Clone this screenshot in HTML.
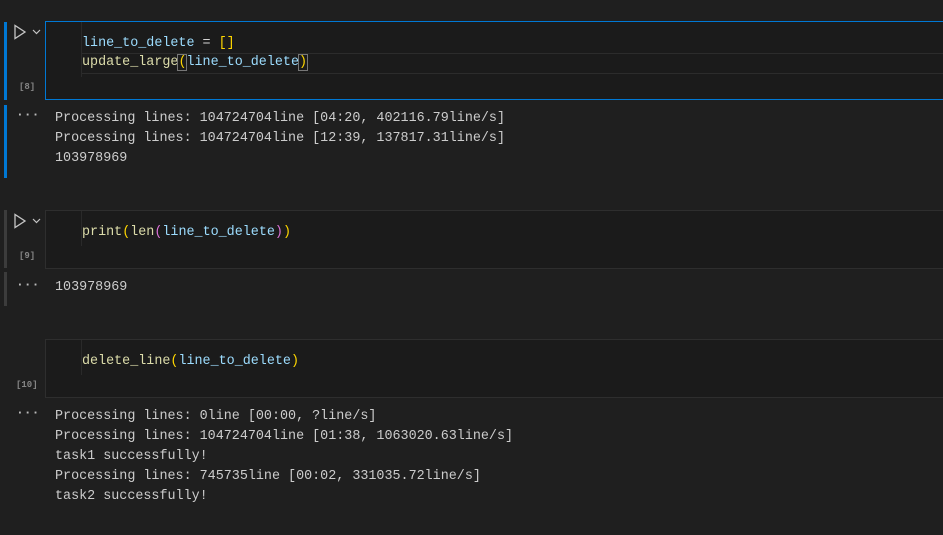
<!DOCTYPE html>
<html><head><style>
body{margin:0;width:943px;height:535px;background:#1f1f1f;overflow:hidden;position:relative;font-family:"Liberation Mono",monospace;font-size:13.4px;}
.a{position:absolute}
.box{position:absolute;left:45px;width:920px;background:#1b1b1b;border:1px solid #2e2e2e;box-sizing:border-box}
.t{position:absolute;white-space:pre;line-height:20px}
.o{color:#cccccc}
.f{color:#dcdcaa}.v{color:#9cdcfe}.y{color:#ffd700}.p{color:#da70d6}.w{color:#d4d4d4}.b{color:#179fff}
.num{position:absolute;color:#858585;font-size:9px;font-weight:bold}
.dots{position:absolute;color:#bbb;font-size:13px;font-weight:bold;letter-spacing:0px}
</style></head><body>
<div class="a" style="left:4px;top:22px;width:3px;height:78px;background:#0078d4"></div>
<div class="a" style="left:4px;top:105px;width:3px;height:73px;background:#0078d4"></div>
<div class="box" style="top:21px;height:79px;border:1px solid #0078d4"></div>
<div class="a" style="left:81px;top:22px;width:1px;height:55px;background:#2a2a2a"></div>
<div class="a" style="left:82px;top:53px;width:870px;height:19px;border-top:1px solid #2c2c2c;border-bottom:1px solid #2c2c2c"></div>
<svg class="a" style="left:13px;top:24px" width="30" height="16"><path d="M2 1.5 L2 14.5 L12 8 Z" fill="none" stroke="#c5c5c5" stroke-width="1.3"/><path d="M20 6 L23.5 9.5 L27 6" fill="none" stroke="#c5c5c5" stroke-width="1.2"/></svg>
<div class="num" style="left:19px;top:82px">[8]</div>
<div class="t" style="left:82px;top:34px"><span class="v">line_to_delete</span> <span class="w">=</span> <span class="y">[]</span></div>
<div class="t" style="left:82px;top:53px"><span class="f">update_large</span><span class="y" style="outline:1px solid #777">(</span><span class="v">line_to_delete</span><span class="y" style="outline:1px solid #777">)</span></div>
<div class="dots" style="left:16px;top:107px">···</div>
<div class="t o" style="left:55px;top:109px">Processing lines: 104724704line [04:20, 402116.79line/s]
Processing lines: 104724704line [12:39, 137817.31line/s]
103978969</div>

<div class="a" style="left:4px;top:210px;width:3px;height:58px;background:#3c3c3c"></div>
<div class="a" style="left:4px;top:272px;width:3px;height:34px;background:#3c3c3c"></div>
<div class="box" style="top:210px;height:59px"></div>
<div class="a" style="left:81px;top:211px;width:1px;height:35px;background:#2a2a2a"></div>
<svg class="a" style="left:13px;top:213px" width="30" height="16"><path d="M2 1.5 L2 14.5 L12 8 Z" fill="none" stroke="#c5c5c5" stroke-width="1.3"/><path d="M20 6 L23.5 9.5 L27 6" fill="none" stroke="#c5c5c5" stroke-width="1.2"/></svg>
<div class="num" style="left:19px;top:251px">[9]</div>
<div class="t" style="left:82px;top:223px"><span class="f">print</span><span class="y">(</span><span class="f">len</span><span class="p">(</span><span class="v">line_to_delete</span><span class="p">)</span><span class="y">)</span></div>
<div class="dots" style="left:16px;top:277px">···</div>
<div class="t o" style="left:55px;top:278px">103978969</div>

<div class="box" style="top:339px;height:59px"></div>
<div class="a" style="left:81px;top:340px;width:1px;height:35px;background:#2a2a2a"></div>
<div class="num" style="left:16px;top:380px">[10]</div>
<div class="t" style="left:82px;top:352px"><span class="f">delete_line</span><span class="y">(</span><span class="v">line_to_delete</span><span class="y">)</span></div>
<div class="dots" style="left:16px;top:405px">···</div>
<div class="t o" style="left:55px;top:407px">Processing lines: 0line [00:00, ?line/s]
Processing lines: 104724704line [01:38, 1063020.63line/s]
task1 successfully!
Processing lines: 745735line [00:02, 331035.72line/s]
task2 successfully!</div>
</body></html>
